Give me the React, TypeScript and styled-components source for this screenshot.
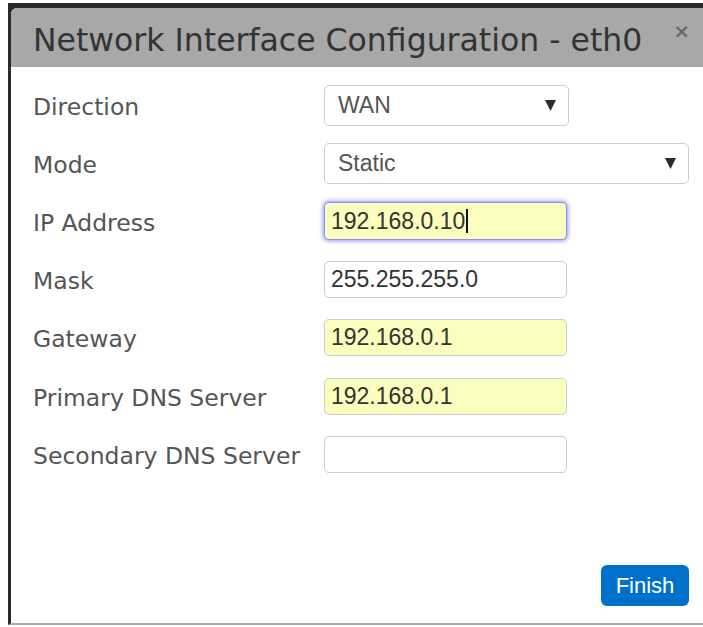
import React from "react";
import styled, { createGlobalStyle, css } from "styled-components";

const GlobalStyle = createGlobalStyle`
  html, body {
    margin: 0;
    padding: 0;
    background: #ffffff;
    overflow: hidden;
  }
  body {
    width: 703px;
    height: 627px;
  }
`;

const Frame = styled.div`
  margin: 3px 0 0 8px;
  height: 615px;
  border-top: 5px solid #2a2a2a;
  border-left: 3px solid #2a2a2a;
  border-bottom: 2px solid #a9a9a9;
  background: #2a2a2a;
`;

const Dialog = styled.div`
  height: 100%;
  display: flex;
  flex-direction: column;
  background: #ffffff;
  border-top-left-radius: 6px;
  overflow: hidden;
`;

const TitleBar = styled.div`
  height: 59px;
  flex: none;
  box-sizing: border-box;
  display: flex;
  align-items: center;
  padding: 5px 13px 0 22px;
  background: #a8a8a8;
`;

const Title = styled.h1`
  flex: 1;
  margin: 0;
  font-family: "DejaVu Sans", sans-serif;
  font-weight: normal;
  font-size: 31.5px;
  color: #333333;
  white-space: nowrap;
`;

const CloseButton = styled.span`
  align-self: flex-start;
  margin-top: 8px;
  font-family: "DejaVu Sans", sans-serif;
  font-weight: bold;
  font-size: 20px;
  line-height: 1;
  color: #6a6a6a;
`;

const Body = styled.div`
  flex: 1;
  display: flex;
  flex-direction: column;
  padding: 9px 14px 17px 22px;
`;

const Form = styled.div`
  display: grid;
  grid-template-columns: 291px 1fr;
  grid-auto-rows: 58.2px;
  align-items: center;
`;

const Label = styled.label`
  padding-top: 3px;
  font-family: "DejaVu Sans", sans-serif;
  font-size: 23.5px;
  color: #555555;
  white-space: nowrap;
`;

const controlText = css`
  box-sizing: border-box;
  display: flex;
  align-items: center;
  font-family: "Liberation Sans", Arial, sans-serif;
  font-size: 23px;
  border: 1px solid #cccccc;
  border-radius: 5px;
`;

const Select = styled.div<{ $wide?: boolean }>`
  ${controlText};
  width: ${(p) => (p.$wide ? "100%" : "245px")};
  height: 41px;
  padding: 0 12px 0 13px;
  color: #555555;
  background: #ffffff;
  justify-content: space-between;
`;

const Arrow = styled.svg`
  width: 11px;
  height: 11px;
  flex: none;
`;

const Field = styled.div<{ $filled?: boolean; $focused?: boolean }>`
  ${controlText};
  width: 243px;
  height: 37px;
  padding: 0 6px;
  color: #333333;
  background: ${(p) => (p.$filled ? "#faffbd" : "#ffffff")};
  ${(p) =>
    p.$focused &&
    css`
      height: 38px;
      border-color: #8d8df0;
      box-shadow: 0 0 4px 1px rgba(110, 110, 255, 0.75);
    `}
`;

const Caret = styled.span`
  display: inline-block;
  width: 1.5px;
  height: 24px;
  margin-left: 1px;
  background: #111111;
`;

const Footer = styled.div`
  margin-top: auto;
  display: flex;
  justify-content: flex-end;
`;

const FinishButton = styled.button`
  width: 88px;
  height: 41px;
  padding: 0;
  border: none;
  border-radius: 6px;
  background: #0071ca;
  color: #ffffff;
  font-family: "Liberation Sans", Arial, sans-serif;
  font-size: 22px;
  cursor: pointer;
`;

const DownArrow = () => (
  <Arrow viewBox="0 0 11 11">
    <polygon points="0,0 11,0 5.5,11" fill="#2b2b2b" />
  </Arrow>
);

type Row =
  | { label: string; kind: "select"; value: string; wide?: boolean }
  | { label: string; kind: "field"; value: string; filled?: boolean; focused?: boolean };

const rows: Row[] = [
  { label: "Direction", kind: "select", value: "WAN" },
  { label: "Mode", kind: "select", value: "Static", wide: true },
  { label: "IP Address", kind: "field", value: "192.168.0.10", filled: true, focused: true },
  { label: "Mask", kind: "field", value: "255.255.255.0" },
  { label: "Gateway", kind: "field", value: "192.168.0.1", filled: true },
  { label: "Primary DNS Server", kind: "field", value: "192.168.0.1", filled: true },
  { label: "Secondary DNS Server", kind: "field", value: "" },
];

export default function App() {
  return (
    <>
      <GlobalStyle />
      <Frame>
        <Dialog>
          <TitleBar>
            <Title>Network Interface Configuration - eth0</Title>
            <CloseButton>×</CloseButton>
          </TitleBar>
          <Body>
            <Form>
              {rows.map((row) => (
                <React.Fragment key={row.label}>
                  <Label>{row.label}</Label>
                  {row.kind === "select" ? (
                    <Select $wide={row.wide}>
                      <span>{row.value}</span>
                      <DownArrow />
                    </Select>
                  ) : (
                    <Field $filled={row.filled} $focused={row.focused}>
                      {row.value}
                      {row.focused && <Caret />}
                    </Field>
                  )}
                </React.Fragment>
              ))}
            </Form>
            <Footer>
              <FinishButton>Finish</FinishButton>
            </Footer>
          </Body>
        </Dialog>
      </Frame>
    </>
  );
}
